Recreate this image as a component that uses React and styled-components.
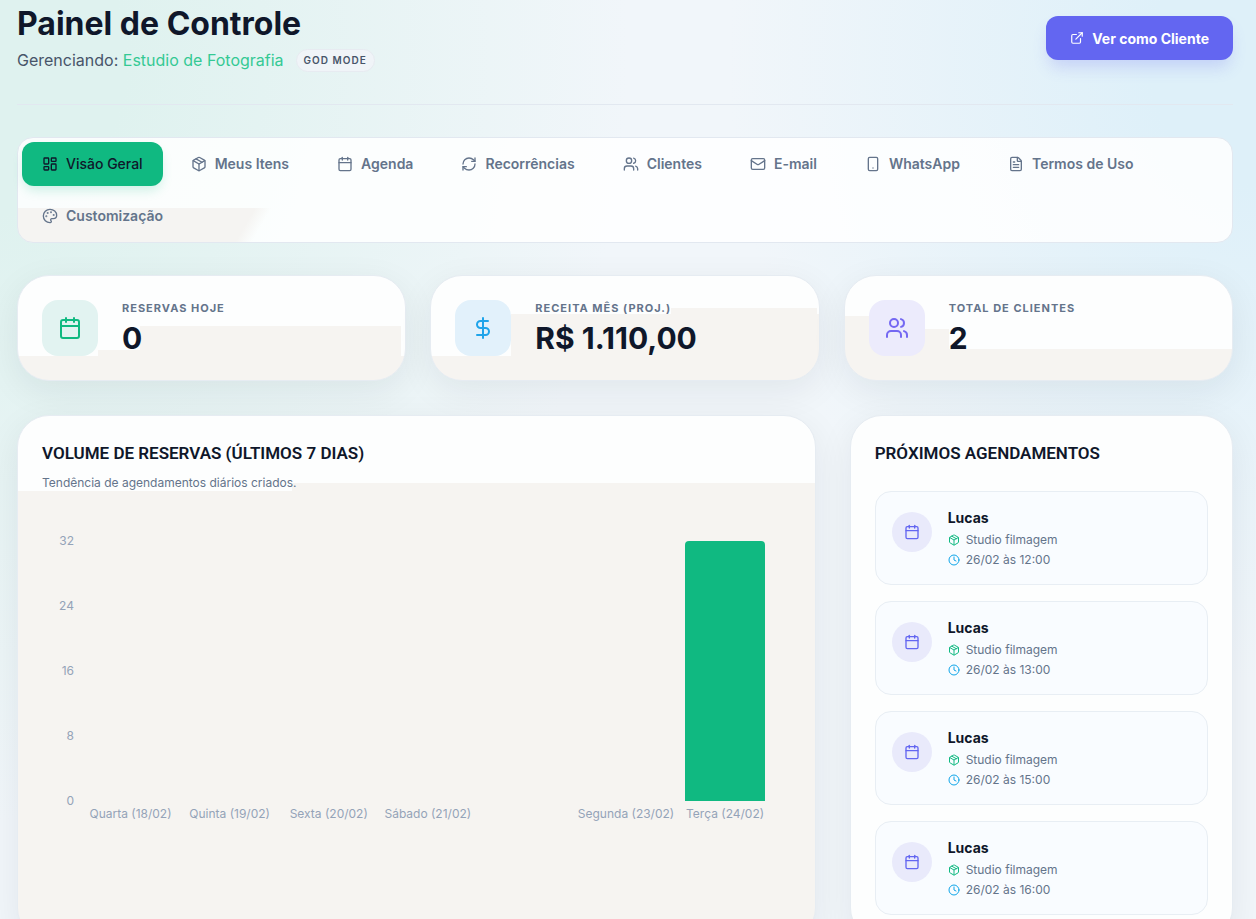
import React from "react";
import styled, { createGlobalStyle, css } from "styled-components";
import {
  Calendar,
  Clock,
  DollarSign,
  ExternalLink,
  FileText,
  LayoutDashboard,
  Mail,
  Package,
  Palette,
  RefreshCw,
  Smartphone,
  Users,
} from "lucide-react";

const TABS = [
  { label: "Visão Geral", icon: LayoutDashboard },
  { label: "Meus Itens", icon: Package },
  { label: "Agenda", icon: Calendar },
  { label: "Recorrências", icon: RefreshCw },
  { label: "Clientes", icon: Users },
  { label: "E-mail", icon: Mail },
  { label: "WhatsApp", icon: Smartphone },
  { label: "Termos de Uso", icon: FileText },
  { label: "Customização", icon: Palette },
];

const STATS = [
  { label: "Reservas hoje", value: "0", icon: Calendar, tone: "green" },
  { label: "Receita mês (proj.)", value: "R$ 1.110,00", icon: DollarSign, tone: "blue" },
  { label: "Total de clientes", value: "2", icon: Users, tone: "violet" },
];

const TICKS = [32, 24, 16, 8, 0];

const DAYS = [
  { label: "Quarta (18/02)", count: 0 },
  { label: "Quinta (19/02)", count: 0 },
  { label: "Sexta (20/02)", count: 0 },
  { label: "Sábado (21/02)", count: 0 },
  { label: "", count: 0 },
  { label: "Segunda (23/02)", count: 0 },
  { label: "Terça (24/02)", count: 32 },
];

const BOOKINGS = ["12:00", "13:00", "15:00", "16:00"].map((time) => ({
  client: "Lucas",
  item: "Studio filmagem",
  when: `26/02 às ${time}`,
}));

export default function App() {
  const [active, setActive] = React.useState("Visão Geral");

  return (
    <Page>
      <GlobalStyle />
      <Header>
        <div>
          <Title>Painel de Controle</Title>
          <Managing>
            <span>
              Gerenciando: <Studio>Estudio de Fotografia</Studio>
            </span>
            <ModeBadge>God mode</ModeBadge>
          </Managing>
        </div>
        <ClientButton type="button">
          <ExternalLink size={14} aria-hidden />
          Ver como Cliente
        </ClientButton>
      </Header>

      <Tabs role="tablist" aria-label="Seções do painel">
        {TABS.map(({ label, icon: Icon }) => (
          <Tab
            key={label}
            type="button"
            role="tab"
            aria-selected={active === label}
            $active={active === label}
            onClick={() => setActive(label)}
          >
            <Icon size={16} aria-hidden />
            {label}
          </Tab>
        ))}
      </Tabs>

      <Stats>
        {STATS.map(({ label, value, icon: Icon, tone }) => (
          <StatCard key={label} $tone={tone}>
            <StatIcon $tone={tone}>
              <Icon size={24} aria-hidden />
            </StatIcon>
            <div>
              <StatLabel>{label}</StatLabel>
              <StatValue>{value}</StatValue>
            </div>
          </StatCard>
        ))}
      </Stats>

      <Columns>
        <ChartCard>
          <CardTitle>Volume de Reservas (Últimos 7 dias)</CardTitle>
          <CardHint>Tendência de agendamentos diários criados.</CardHint>
          <Chart>
            <Axis>
              {TICKS.map((tick) => (
                <span key={tick}>{tick}</span>
              ))}
            </Axis>
            <Plot>
              {DAYS.map((day, i) => (
                <Bar key={i} style={{ height: `${(day.count / TICKS[0]) * 100}%` }} />
              ))}
            </Plot>
            <DayLabels>
              {DAYS.map((day, i) => (
                <DayLabel key={i}>{day.label}</DayLabel>
              ))}
            </DayLabels>
          </Chart>
        </ChartCard>

        <Card>
          <CardTitle>Próximos Agendamentos</CardTitle>
          <BookingList>
            {BOOKINGS.map((booking) => (
              <Booking key={booking.when}>
                <BookingIcon>
                  <Calendar size={16} aria-hidden />
                </BookingIcon>
                <BookingText>
                  <Client>{booking.client}</Client>
                  <Detail $color="#10b981">
                    <Package size={12} aria-hidden />
                    {booking.item}
                  </Detail>
                  <Detail $color="#0ea5e9">
                    <Clock size={12} aria-hidden />
                    {booking.when}
                  </Detail>
                </BookingText>
              </Booking>
            ))}
          </BookingList>
        </Card>
      </Columns>
    </Page>
  );
}

const GlobalStyle = createGlobalStyle`
  *, *::before, *::after { box-sizing: border-box; }
  html { scrollbar-width: none; }
  body {
    margin: 0;
    font-family: Inter, "Liberation Sans", sans-serif;
    color: #0f172a;
    background:
      radial-gradient(50% 760px at 0% 60px, #dff2ef 0%, #dff2ef 20%, transparent 100%),
      radial-gradient(42% 620px at 100% 60px, #def0f9 0%, #def0f9 20%, transparent 100%),
      #f1f6fa;
  }
  h1, h2, h3, p, ul { margin: 0; padding: 0; }
  button { font-family: inherit; border: none; cursor: pointer; }
`;

const TONES = {
  green: { color: "#10b981", tint: "#e2f3f1" },
  blue: { color: "#1fa4ea", tint: "#e2f1fb" },
  violet: { color: "#7468f2", tint: "#ecebfc" },
};

const WARM = "#f6f4f1";
const warmFill = `linear-gradient(${WARM}, ${WARM})`;

// warm lower part of each stat card, stepped around its icon and text
const STEPS = {
  green: css`
    background-size: 100% 24px, calc(100% - 84px) 30px, calc(100% - 126px) 54px;
    background-position: left bottom, right 4px bottom, right 4px bottom;
  `,
  blue: css`
    background-size: 100% 24px, calc(100% - 80px) 66px, calc(100% - 242px) 72px;
    background-position: left bottom, right bottom, right 2px bottom;
  `,
  violet: css`
    background-size: 100% 31px, 24px 64px, 104px 51px;
    background-position: left bottom, left bottom, left bottom;
  `,
};

const Page = styled.main`
  padding: 3px 23px 24px 17px;
`;

const Header = styled.header`
  display: flex;
  align-items: center;
  justify-content: space-between;
  padding-bottom: 31px;
  margin-bottom: 32px;
  border-bottom: 1px solid #e2e8f0;
`;

const Title = styled.h1`
  font-size: 32px;
  line-height: 42px;
  font-weight: 700;
`;

const Managing = styled.div`
  display: flex;
  align-items: center;
  gap: 12px;
  margin-top: 2px;
  font-size: 16px;
  line-height: 26px;
  color: #475569;
`;

const Studio = styled.span`
  color: #34c994;
`;

const ModeBadge = styled.span`
  padding: 0 7px;
  border: 1px solid #e7ebf1;
  border-radius: 12px;
  background: #f0f4f8;
  font-size: 10px;
  line-height: 21px;
  font-weight: 600;
  letter-spacing: 1px;
  text-transform: uppercase;
`;

const ClientButton = styled.button`
  display: flex;
  align-items: center;
  gap: 8px;
  height: 44px;
  padding: 0 24px;
  border-radius: 12px;
  background: #6366f1;
  color: white;
  font-size: 14px;
  font-weight: 700;
  box-shadow: 0 10px 16px -3px rgb(99 102 241 / 0.22);
`;

const Tabs = styled.nav`
  display: flex;
  flex-wrap: wrap;
  gap: 8px;
  padding: 4px;
  margin-bottom: 32px;
  border: 1px solid #e2e8f0;
  border-radius: 16px;
  background:
    linear-gradient(120deg, #f5f4f2 0 86%, transparent 92%) left bottom / 256px 34px no-repeat,
    rgb(255 255 255 / 0.85);
`;

const Tab = styled.button`
  display: flex;
  align-items: center;
  gap: 8px;
  height: 44px;
  padding: 0 20px;
  border-radius: 12px;
  background: transparent;
  color: #64748b;
  font-size: 14px;
  line-height: 16px;
  font-weight: 600;

  ${({ $active }) =>
    $active &&
    css`
      background: #10b981;
      color: #0f172a;
      font-weight: 500;
      box-shadow: 0 6px 12px -2px rgb(16 185 129 / 0.2);
    `}
`;

const Stats = styled.section`
  display: grid;
  grid-template-columns: repeat(3, 1fr);
  gap: 24px;
  margin-bottom: 34px;
`;

const Card = styled.section`
  padding: 24px;
  border: 1px solid #e6ecf2;
  border-radius: 32px;
  background-color: #fdfefe;
  box-shadow: 0 10px 36px rgb(15 23 42 / 0.07);
`;

const StatCard = styled(Card)`
  display: flex;
  align-items: center;
  gap: 24px;
  background-image: ${warmFill}, ${warmFill}, ${warmFill};
  background-repeat: no-repeat;
  ${({ $tone }) => STEPS[$tone]}
`;

const StatIcon = styled.div`
  display: grid;
  place-items: center;
  width: 56px;
  height: 56px;
  border-radius: 16px;
  color: ${({ $tone }) => TONES[$tone].color};
  background: ${({ $tone }) => TONES[$tone].tint};
`;

const StatLabel = styled.h3`
  font-size: 11px;
  line-height: 16px;
  font-weight: 700;
  letter-spacing: 1px;
  text-transform: uppercase;
  color: #64748b;
`;

const StatValue = styled.p`
  margin-top: 4px;
  font-size: 30px;
  line-height: 36px;
  font-weight: 700;
`;

const Columns = styled.div`
  display: grid;
  grid-template-columns: 25fr 12fr;
  gap: 34px;
`;

const ChartCard = styled(Card)`
  background-image:
    linear-gradient(transparent 75px, ${WARM} 75px),
    linear-gradient(transparent 67px, ${WARM} 67px);
  background-size: 100% 100%, calc(100% - 274px) 100%;
  background-position: left top, right top;
  background-repeat: no-repeat;
`;

const CardTitle = styled.h2`
  font-family: Roboto, Inter, sans-serif;
  font-size: 17px;
  line-height: 26px;
  font-weight: 600;
  text-transform: uppercase;
`;

const CardHint = styled.p`
  margin-top: 8px;
  font-size: 12px;
  line-height: 18px;
  color: #64748b;
`;

const Chart = styled.div`
  display: grid;
  grid-template-columns: 32px 1fr;
  column-gap: 7px;
  margin-top: 40px;
  padding-right: 16px;
  font-size: 12px;
  line-height: 18px;
  color: #94a3b8;
`;

const Axis = styled.div`
  display: flex;
  flex-direction: column;
  justify-content: space-between;
  height: 278px;
  text-align: right;
`;

const Plot = styled.div`
  display: grid;
  grid-template-columns: repeat(7, 1fr);
  align-items: end;
  padding: 9px 0;
`;

const Bar = styled.div`
  width: 80%;
  justify-self: center;
  border-radius: 4px 4px 0 0;
  background: #10b981;
`;

const DayLabels = styled.div`
  grid-column: 2;
  display: grid;
  grid-template-columns: repeat(7, 1fr);
  margin-top: -5px;
`;

const DayLabel = styled.span`
  display: flex;
  justify-content: center;
  white-space: nowrap;
`;

const BookingList = styled.ul`
  display: grid;
  gap: 16px;
  margin-top: 25px;
  list-style: none;
`;

const Booking = styled.li`
  display: flex;
  gap: 16px;
  padding: 16px;
  border: 1px solid #e8eef4;
  border-radius: 16px;
  background: #f9fcff;
`;

const BookingIcon = styled.div`
  display: grid;
  place-items: center;
  flex: none;
  width: 40px;
  height: 40px;
  margin-top: 4px;
  border-radius: 50%;
  background: #e9eafb;
  color: #6366f1;
`;

const BookingText = styled.div`
  display: grid;
  gap: 4px;
`;

const Client = styled.h3`
  font-size: 14px;
  line-height: 20px;
  font-weight: 700;
`;

const Detail = styled.p`
  display: flex;
  align-items: center;
  gap: 6px;
  font-size: 12px;
  line-height: 16px;
  color: #64748b;

  svg { color: ${({ $color }) => $color}; }
`;
